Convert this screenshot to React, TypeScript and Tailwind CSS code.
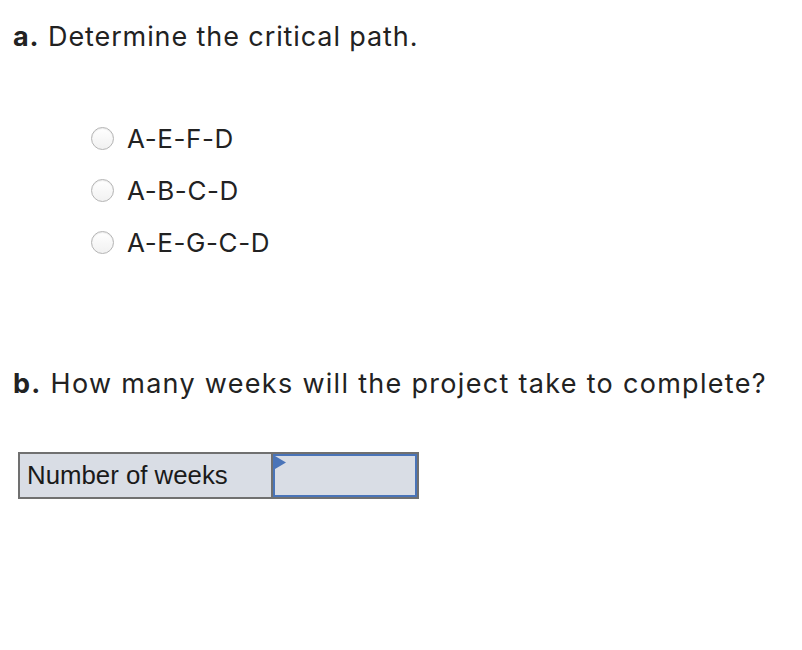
import React from "react";

const options = ["A-E-F-D", "A-B-C-D", "A-E-G-C-D"];

function Radio() {
  return (
    <span className="block w-[23px] h-[23px] rounded-full border border-[#b4b4b4] bg-gradient-to-b from-[#ffffff] to-[#f1f1f1] shadow-[inset_0_1px_1px_rgba(0,0,0,0.08)]" />
  );
}

export default function App() {
  return (
    <div className="w-[802px] h-[650px] bg-white text-[#222222] font-['Inter',sans-serif]">
      <div className="pl-[13px] pt-[19px] text-[27px] leading-[36px] tracking-[0.9px]">
        <span className="font-bold">a.</span> Determine the critical path.
      </div>

      <div className="mt-[57px] pl-[91px] flex flex-col">
        {options.map((o) => (
          <label key={o} className="flex items-center gap-[13px] h-[52px] text-[26px] tracking-[0.6px]">
            <Radio />
            <span>{o}</span>
          </label>
        ))}
      </div>

      <div className="mt-[98px] pl-[13px] text-[27px] leading-[36px] tracking-[1.3px]">
        <span className="font-bold">b.</span> How many weeks will the project take to complete?
      </div>

      <div className="mt-[50px] ml-[18px] w-[401px] h-[47px] flex border-2 border-[#707070] bg-[#d9dde5]">
        <div className="w-[251px] flex items-center pl-[7px] text-[25.8px] text-[#1a1a1a] font-['Liberation_Sans',Arial,sans-serif]">
          Number of weeks
        </div>
        <div className="w-[2px] bg-[#707070]" />
        <div className="relative flex-1 border-2 border-[#4a74b8] bg-[#d9dde5]">
          <svg className="absolute left-0 top-0" width="12" height="14" viewBox="0 0 12 14">
            <polygon points="0,0 11,6.5 0,13" fill="#4a74b8" />
          </svg>
        </div>
      </div>
    </div>
  );
}
